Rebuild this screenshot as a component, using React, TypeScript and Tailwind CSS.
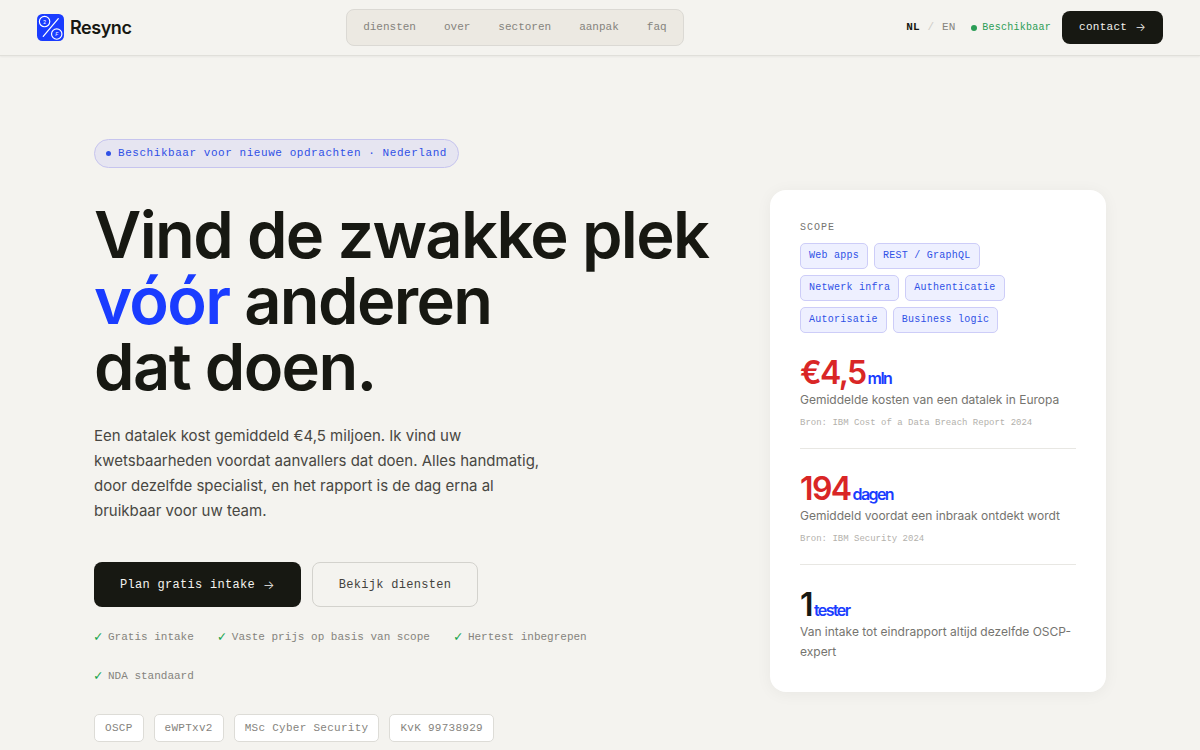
import React from 'react';

const navItems = ['diensten', 'over', 'sectoren', 'aanpak', 'faq'];

const checks = [
  'Gratis intake',
  'Vaste prijs op basis van scope',
  'Hertest inbegrepen',
  'NDA standaard',
];

const badges = ['OSCP', 'eWPTxv2', 'MSc Cyber Security', 'KvK 99738929'];

const scope = [
  'Web apps',
  'REST / GraphQL',
  'Netwerk infra',
  'Authenticatie',
  'Autorisatie',
  'Business logic',
];

interface StatProps {
  value: string;
  unit: string;
  text: string;
  source?: string;
  alert?: boolean;
}

const stats: StatProps[] = [
  {
    value: '€4,5',
    unit: 'mln',
    text: 'Gemiddelde kosten van een datalek in Europa',
    source: 'Bron: IBM Cost of a Data Breach Report 2024',
    alert: true,
  },
  {
    value: '194',
    unit: 'dagen',
    text: 'Gemiddeld voordat een inbraak ontdekt wordt',
    source: 'Bron: IBM Security 2024',
    alert: true,
  },
  {
    value: '1',
    unit: 'tester',
    text: 'Van intake tot eindrapport altijd dezelfde OSCP-expert',
  },
];

const Logo: React.FC = () => (
  <svg viewBox="0 0 26 26" className="h-[27px] w-[27px]" aria-hidden="true">
    <rect width="26" height="26" rx="5" fill="#1a3cff" />
    <g fill="none" stroke="#fff" strokeLinecap="round">
      <path d="M6 21.500 20.500 4.500" strokeWidth="1.2" />
      <circle cx="7.300" cy="7.300" r="5" strokeWidth="1.1" />
      <circle cx="19" cy="19.300" r="5" strokeWidth="1.1" />
    </g>
    <g fill="#fff" fontFamily="Inter, sans-serif" fontSize="5" textAnchor="middle">
      <text x="7.300" y="9.200">2</text>
      <text x="19" y="21.200" fontStyle="italic">
        F
      </text>
    </g>
  </svg>
);

const Arrow: React.FC = () => (
  <span className="ml-2 font-['Inter',sans-serif] font-light">→</span>
);

const Header: React.FC = () => (
  <header className="flex h-14 items-center justify-between border-b border-[#e0dfda] px-[37px] shadow-xs">
    <a href="#" className="flex items-center gap-1.5">
      <Logo />
      <span className="text-lg font-semibold tracking-tight">Resync</span>
    </a>
    <nav className="mr-2 flex h-[37px] items-center rounded-lg border border-[#dbd9d4] bg-[#ece9e2] px-0.5 font-['Liberation_Mono',monospace] text-[11px] text-[#85837d]">
      {navItems.map((item) => (
        <a key={item} href={`#${item}`} className="px-3.5 py-1.5 hover:text-[#171812]">
          {item}
        </a>
      ))}
    </nav>
    <div className="flex items-center font-['Liberation_Mono',monospace] text-[11px]">
      <button type="button" className="font-bold">
        NL
      </button>
      <span className="mx-2 text-[#cfcdc8]">/</span>
      <button type="button" className="text-[#85837d]">
        EN
      </button>
      <span className="ml-4 flex items-center gap-[5px] text-[10px] tracking-wide text-[#2a9d55]">
        <span className="h-1.5 w-1.5 rounded-full bg-[#2a9d55]" />
        Beschikbaar
      </span>
      <a
        href="#contact"
        className="ml-[11px] flex h-[33px] items-center rounded-lg bg-[#171812] px-[17px] text-[11px] tracking-wide text-[#f4f3ef]"
      >
        contact <Arrow />
      </a>
    </div>
  </header>
);

const Stat: React.FC<StatProps> = ({ value, unit, text, source, alert }) => (
  <div className="border-b border-[#e8e7e3] pt-6 pb-[18px] first:pt-0 last:border-b-0 last:pb-0">
    <p className="text-[32px] leading-8 font-semibold tracking-tighter">
      <span className={alert ? 'text-[#d92626]' : 'text-[#171812]'}>{value}</span>
      <span className="ml-0.5 text-base text-[#1a3cff]">{unit}</span>
    </p>
    <p className="text-xs leading-5 text-[#75746f]">{text}</p>
    {source && (
      <p className="mt-1.5 font-['Liberation_Mono',monospace] text-[9px] leading-[14px] text-[#b3b1ac]">
        {source}
      </p>
    )}
  </div>
);

const ScopeCard: React.FC = () => (
  <aside className="rounded-2xl bg-white p-[30px] shadow-[0_2px_16px_rgba(0,0,0,0.05)]">
    <h2 className="font-['Liberation_Mono',monospace] text-[10px] leading-[15px] tracking-widest text-[#75746f]">
      SCOPE
    </h2>
    <ul className="mt-2 mb-6 flex flex-wrap gap-1.5 font-['Liberation_Mono',monospace] text-[10px] tracking-wide text-[#2f50e6]">
      {scope.map((item) => (
        <li
          key={item}
          className="flex h-[26px] items-center rounded-[5px] border border-[#cdcdf8] bg-[#eef0ff] px-2"
        >
          {item}
        </li>
      ))}
    </ul>
    <div>
      {stats.map((stat) => (
        <Stat key={stat.unit} {...stat} />
      ))}
    </div>
  </aside>
);

const App: React.FC = () => {
  return (
    <div className="min-h-screen bg-[#f4f3ef] font-['Inter',sans-serif] text-[#171812]">
      <Header />
      <main className="mx-auto grid max-w-[1060px] items-center gap-16 px-6 pt-[83px] pb-2 lg:grid-cols-[minmax(0,1fr)_336px]">
        <section>
          <p className="flex h-[29px] w-fit items-center gap-[7px] rounded-full border border-[#c6c4ee] bg-[#e6e5f1] px-[11px] font-['Liberation_Mono',monospace] text-[11px] tracking-wider text-[#2f50e6]">
            <span className="h-[5px] w-[5px] rounded-full bg-[#2f50e6]" />
            Beschikbaar voor nieuwe opdrachten · Nederland
          </p>
          <h1 className="mt-[34px] text-[65px] leading-[66px] font-semibold tracking-tight lg:whitespace-nowrap">
            Vind de zwakke plek
            <br />
            <span className="text-[#1a3cff]">vóór</span> anderen
            <br />
            dat doen.
          </h1>
          <p className="mt-[23px] max-w-[460px] text-[15px] leading-[25px] text-[#484742]">
            Een datalek kost gemiddeld €4,5 miljoen. Ik vind uw kwetsbaarheden
            voordat aanvallers dat doen. Alles handmatig, door dezelfde
            specialist, en het rapport is de dag erna al bruikbaar voor uw team.
          </p>
          <div className="mt-[39px] flex flex-wrap gap-[11px] font-['Liberation_Mono',monospace] text-xs tracking-wide">
            <a
              href="#contact"
              className="flex h-[45px] items-center rounded-lg bg-[#171812] px-[26px] text-[#f4f3ef]"
            >
              Plan gratis intake <Arrow />
            </a>
            <a
              href="#diensten"
              className="flex h-[45px] items-center rounded-lg border border-[#d3d2cd] px-[26px] text-[#43423d]"
            >
              Bekijk diensten
            </a>
          </div>
          <ul className="mt-[22px] flex max-w-[600px] flex-wrap gap-x-6 gap-y-[22px] font-['Liberation_Mono',monospace] text-[11px] leading-[17px] text-[#85837d]">
            {checks.map((item) => (
              <li key={item} className="flex gap-1">
                <span className="w-2.5 text-sm leading-[17px] text-[#16a34a]">✓</span>
                {item}
              </li>
            ))}
          </ul>
          <ul className="mt-[29px] flex flex-wrap gap-2.5 font-['Liberation_Mono',monospace] text-[11px] tracking-wide text-[#85837d]">
            {badges.map((item) => (
              <li
                key={item}
                className="flex h-7 items-center rounded-[5px] border border-[#dddcd7] bg-white px-2.5"
              >
                {item}
              </li>
            ))}
          </ul>
        </section>
        <ScopeCard />
      </main>
    </div>
  );
};

export default App;
